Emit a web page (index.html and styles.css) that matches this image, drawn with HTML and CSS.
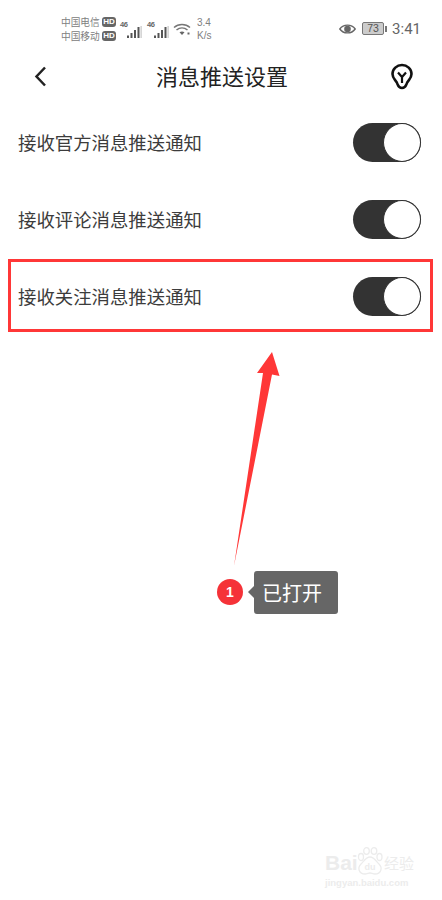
FILE: index.html
```html
<!DOCTYPE html>
<html lang="zh-CN">

<head>
    <meta charset="UTF-8">
    <meta name="viewport" content="width=device-width, initial-scale=1.0">
    <title>消息推送设置</title>
    <link rel="stylesheet" href="styles.css">
</head>

<body>
    <div class="page">
        <div class="status-bar">
            <div class="carriers">
                <div class="carrier">中国电信 <span class="hd">HD</span></div>
                <div class="carrier">中国移动 <span class="hd">HD</span></div>
            </div>
            <div class="signal">
                <span class="net">46</span>
                <svg width="15" height="14" viewBox="0 0 15 14">
                    <path d="M0 10.500h2V13H0zM3.500 8h2v5h-2zM7 5h2v8H7zM10.500 2h2v11h-2z" fill="#555" />
                    <path d="M13.600 1h1v12h-1z" fill="#bbb" />
                </svg>
            </div>
            <div class="signal">
                <span class="net">46</span>
                <svg width="15" height="14" viewBox="0 0 15 14">
                    <path d="M0 10.500h2V13H0zM3.500 8h2v5h-2zM7 5h2v8H7zM10.500 2h2v11h-2z" fill="#555" />
                    <path d="M13.600 1h1v12h-1z" fill="#bbb" />
                </svg>
            </div>
            <svg class="wifi" width="18" height="14" viewBox="0 0 18 14">
                <path d="M1 5.500C5.500 1.500 12.500 1.500 17 5.500" fill="none" stroke="#777" stroke-width="1.500" />
                <path d="M3.500 8C6.800 5.200 11.200 5.200 14.500 8" fill="none" stroke="#777" stroke-width="1.500" />
                <path d="M6.500 10.300C8 9.200 10 9.200 11.500 10.300L9 13z" fill="#666" />
                <path d="M14.500 10.500h2v2h-2z" fill="#666" />
            </svg>
            <div class="speed">3.4<br>K/s</div>
            <div class="status-right">
                <svg class="eye" width="17" height="12" viewBox="0 0 17 12">
                    <path d="M.8 6C4.500.8 12.500.8 16.200 6 12.500 11.200 4.500 11.200.8 6z" fill="none" stroke="#666" stroke-width="1.400" />
                    <circle cx="8.500" cy="6" r="3.300" fill="#666" />
                </svg>
                <div class="battery"><span class="battery-body">73</span><span class="battery-tip"></span></div>
                <span class="time">3:41</span>
            </div>
        </div>

        <div class="nav">
            <svg class="back" width="13" height="21" viewBox="0 0 13 21">
                <path d="M11 1.500L2.500 10.500L11 19.500" fill="none" stroke="#222" stroke-width="2.500" />
            </svg>
            <h1>消息推送设置</h1>
            <svg class="bulb" width="24" height="27" viewBox="0 0 24 27">
                <path d="M12 2C6.800 2 2.500 6 2.500 11C2.500 15 5 16.500 6.800 19.500C8 22 8 25 12 25C16 25 16 22 17.200 19.500C19 16.500 21.500 15 21.500 11C21.500 6 17.200 2 12 2z" fill="none" stroke="#111" stroke-width="2.600" />
                <path d="M8 9.500L12 14L16 9.500M12 14V20" fill="none" stroke="#111" stroke-width="2.200" />
            </svg>
        </div>

        <div class="settings">
            <div class="row">
                <span class="row-label">接收官方消息推送通知</span>
                <div class="switch"><div class="knob"></div></div>
            </div>
            <div class="row">
                <span class="row-label">接收评论消息推送通知</span>
                <div class="switch"><div class="knob"></div></div>
            </div>
            <div class="row">
                <span class="row-label">接收关注消息推送通知</span>
                <div class="switch"><div class="knob"></div></div>
            </div>
        </div>

        <!-- annotations on top of the screenshot -->
        <div class="highlight"></div>
        <svg class="arrow" width="60" height="230" viewBox="0 0 60 230">
            <path d="M42 2L49.500 26L42 24.500L4 216L33 23L27 23z" fill="#ff3737" />
        </svg>
        <div class="step">1</div>
        <div class="tip">已打开</div>

        <div class="watermark">
            <div class="wm-logo">
                <span class="wm-bai">Bai</span>
                <svg class="wm-paw" width="28" height="28" viewBox="0 0 28 28">
                    <g fill="none" stroke="#ececec" stroke-width="1.300">
                        <ellipse cx="5" cy="10" rx="2.500" ry="3.500" />
                        <ellipse cx="10.500" cy="4" rx="2.800" ry="3.300" />
                        <ellipse cx="18" cy="4" rx="2.800" ry="3.300" />
                        <ellipse cx="23.500" cy="10" rx="2.500" ry="3.500" />
                        <path d="M14 10C10 10 8 14 5 17C1 21 3 27 9 27C11 27 12.500 26 14 26C15.500 26 17 27 19 27C25 27 27 21 23 17C20 14 18 10 14 10z" />
                    </g>
                    <text x="14" y="23" class="wm-du">du</text>
                </svg>
                <span class="wm-cn">经验</span>
            </div>
            <div class="wm-url">jingyan.baidu.com</div>
        </div>
    </div>
</body>

</html>
```

FILE: styles.css
```css
* {
    box-sizing: border-box;
}

body {
    margin: 0;
    background-color: #fff;
    font-family: "Noto Sans CJK SC", "Liberation Sans", sans-serif;
}

.page {
    position: relative;
    width: 442px;
    height: 900px;
    overflow: hidden;
}

.status-bar {
    display: flex;
    align-items: center;
    height: 50px;
    padding: 7px 21px 0 61px;
    color: #808080;
}

.carriers {
    width: 55px;
}

.carrier {
    display: flex;
    align-items: center;
    gap: 2px;
    height: 14px;
    font-size: 9.700px;
    white-space: nowrap;
}

.hd {
    padding: 0 1.500px;
    border-radius: 3px;
    background-color: #666;
    color: #fff;
    font-family: "Liberation Sans", sans-serif;
    font-size: 8px;
    font-weight: 700;
    line-height: 10px;
}

.signal {
    display: flex;
    align-items: flex-end;
    margin-left: 4px;
    height: 20px;
}

.signal + .signal {
    margin-left: 5px;
}

.net {
    align-self: flex-start;
    width: 7px;
    margin-top: 1px;
    font-family: "Liberation Sans", sans-serif;
    font-size: 7.500px;
    font-weight: 700;
    line-height: 10px;
    letter-spacing: -0.500px;
    color: #666;
}

.wifi {
    margin-left: 4px;
}

.speed {
    margin-left: 6px;
    font-size: 10px;
    line-height: 13px;
    font-family: "Liberation Sans", sans-serif;
}

.status-right {
    display: flex;
    align-items: center;
    margin-left: auto;
}

.battery {
    display: flex;
    align-items: center;
    margin-left: 6px;
}

.battery-body {
    width: 22px;
    height: 13px;
    border: 1px solid #777;
    border-radius: 2px;
    background-color: #ccc;
    font-family: "Liberation Sans", sans-serif;
    font-size: 10.500px;
    line-height: 11px;
    text-align: center;
    color: #555;
}

.battery-tip {
    width: 2px;
    height: 6px;
    margin-left: 1px;
    background-color: #777;
}

.time {
    margin-left: 5px;
    font-family: "Roboto", sans-serif;
    font-size: 15px;
    color: #666;
}

.nav {
    display: flex;
    align-items: center;
    justify-content: space-between;
    height: 52px;
    padding: 0 28px 0 34px;
}

.nav h1 {
    margin: 0 0 3px 7px;
    font-size: 22px;
    font-weight: 400;
    color: #222;
}

.settings {
    padding-top: 3px;
}

.row {
    display: flex;
    align-items: center;
    justify-content: space-between;
    height: 77px;
    padding: 0 21px 0 18px;
    font-size: 18.400px;
    color: #3c3c3c;
}

.row-label {
    margin-bottom: 3px;
}

.switch {
    display: flex;
    justify-content: flex-end;
    width: 68px;
    height: 39px;
    margin-bottom: 2px;
    border-radius: 20px;
    background-color: #333;
}

.knob {
    width: 38px;
    height: 39px;
    border: 1.500px solid #333;
    border-radius: 50%;
    background-color: #fff;
}

.highlight {
    position: absolute;
    left: 8px;
    top: 259px;
    width: 425px;
    height: 73px;
    border: 3px solid #ff3737;
}

.arrow {
    position: absolute;
    left: 230px;
    top: 350px;
}

.step {
    position: absolute;
    left: 217px;
    top: 579px;
    width: 26px;
    height: 26px;
    border-radius: 50%;
    background-color: #f53238;
    color: #fff;
    font-family: "Liberation Sans", sans-serif;
    font-size: 14px;
    font-weight: 700;
    line-height: 26px;
    text-align: center;
}

.tip {
    position: absolute;
    left: 254px;
    top: 571px;
    width: 84px;
    height: 43px;
    padding-left: 8px;
    border-radius: 3px;
    background-color: #666;
    color: #fff;
    font-size: 20px;
    line-height: 43px;
}

.tip::before {
    content: "";
    position: absolute;
    left: -6px;
    top: 15px;
    border: 6px solid transparent;
    border-left-width: 0;
    border-right-color: #666;
}

.watermark {
    position: absolute;
    left: 325px;
    top: 847px;
    width: 90px;
    color: #ececec;
}

.wm-logo {
    display: flex;
    align-items: flex-end;
    height: 28px;
}

.wm-bai {
    width: 31px;
    font-family: "Liberation Sans", sans-serif;
    font-size: 21px;
    font-weight: 700;
    line-height: 24px;
}

.wm-paw {
    flex-shrink: 0;
}

.wm-du {
    fill: #ececec;
    font-family: "Liberation Sans", sans-serif;
    font-size: 9px;
    font-weight: 700;
    text-anchor: middle;
}

.wm-cn {
    font-size: 15px;
    line-height: 24px;
}

.wm-url {
    margin-top: 2px;
    font-family: "Liberation Sans", sans-serif;
    font-size: 9.500px;
    font-weight: 700;
    line-height: 12px;
    white-space: nowrap;
}
```
